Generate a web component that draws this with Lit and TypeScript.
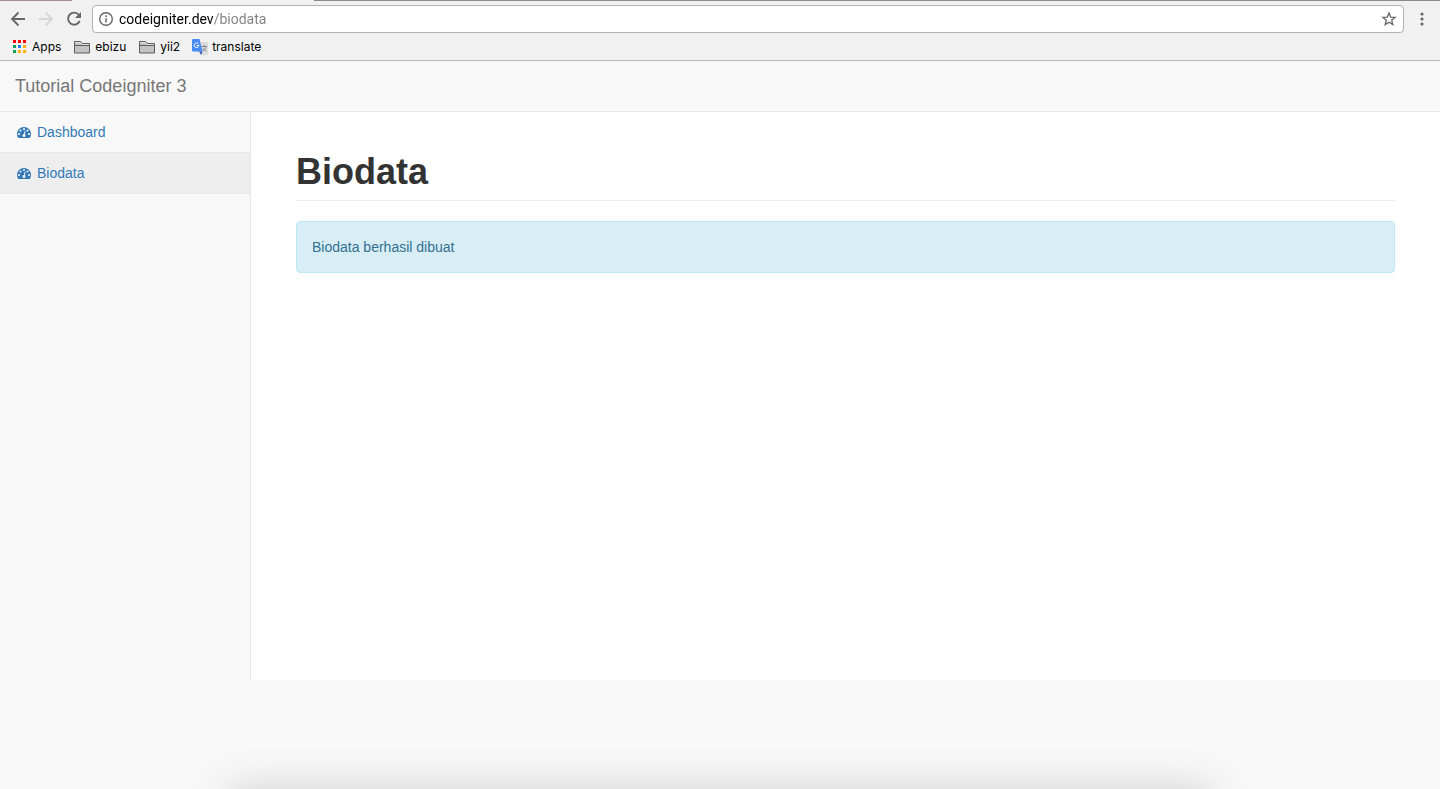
import { LitElement, html, css, svg } from "lit";
import { customElement } from "lit/decorators.js";

const folder = html`<svg width="18" height="14" viewBox="0 0 18 14" aria-hidden="true">
  <path d="M1.500 13V1.500H7.500L9.500 3.500H16.500V13Z" fill="#c4c4c4" stroke="#5c5c5c" stroke-linejoin="round" />
  <path d="M2.500 2.500H7L9 4.500H15.500" stroke="#e4e4e4" fill="none" />
  <path d="M2 5.500H16" stroke="#5c5c5c" />
</svg>`;

const apps = html`<svg width="14" height="14" viewBox="0 0 14 14" aria-hidden="true">
  ${["#f00", "#f00", "#f00", "#0f9d58", "#1a80ff", "#fbb300", "#0f9d58", "#fbb300", "#fbb300"].map(
    (c, i) => svg`<rect x=${(i % 3) * 5} y=${Math.floor(i / 3) * 5} width="3" height="3" fill=${c} />`
  )}
</svg>`;

const translate = html`<svg width="16" height="16" viewBox="0 0 16 16" aria-hidden="true">
  <path d="M6 3H15Q16 3 16 4V15Q16 16 15 16H9Z" fill="#dcdcdc" />
  <path d="M9.500 7.500H15M12 6V8M14 8Q13 11 10.500 12M10.500 9Q12 11 14.500 12" stroke="#7f8b93" fill="none" />
  <path d="M1 0H7.500L10.500 12.500H1Q0 12.500 0 11.500V1Q0 0 1 0Z" fill="#4a8af4" />
  <path d="M7 12.500H10.500L9 16Z" fill="#3059b8" />
  <path d="M6.300 4.800A2.300 2.300 0 1 0 6.800 6.500H4.700" stroke="#fff" fill="none" />
</svg>`;

const gauge = html`<svg class="gauge" width="14" height="14" viewBox="0 0 1792 1792" fill="currentColor" aria-hidden="true">
  <path d="M384 1152q0-53-37.5-90.5t-90.5-37.5-90.5 37.5-37.5 90.5 37.5 90.5 90.5 37.5 90.5-37.5 37.5-90.5zm192-448q0-53-37.5-90.5t-90.5-37.5-90.5 37.5-37.5 90.5 37.5 90.5 90.5 37.5 90.5-37.5 37.5-90.5zm428 481l101-382q6-26-7.5-48.5t-38.5-29.5-48 6.5-30 39.5l-101 382q-60 5-107 43.5t-63 98.5q-20 77 20 146t117 89 146-20 89-117q16-60-6-117t-72-91zm660-33q0-53-37.5-90.5t-90.5-37.5-90.5 37.5-37.5 90.5 37.5 90.5 90.5 37.5 90.5-37.5 37.5-90.5zm-640-640q0-53-37.5-90.5t-90.5-37.5-90.5 37.5-37.5 90.5 37.5 90.5 90.5 37.5 90.5-37.5 37.5-90.5zm448 192q0-53-37.5-90.5t-90.5-37.5-90.5 37.5-37.5 90.5 37.5 90.5 90.5 37.5 90.5-37.5 37.5-90.5zm320 448q0 261-141 483-19 29-54 29h-1402q-35 0-54-29-141-221-141-483 0-182 71-348t191-286 286-191 348-71 348 71 286 191 191 286 71 348z" />
</svg>`;

@customElement("browser-bar")
class BrowserBar extends LitElement {
  static styles = css`
    :host { display: block; background: #f1f1f1; border-bottom: 1px solid #b5b3b5; font-family: Inter, Roboto, sans-serif; color: #000; }
    .edge { display: grid; grid-template-columns: 72px 242px 1fr; height: 1px; }
    .left { background: #a58f8f; }
    .right { background: #8f898d; }
    .tools { display: flex; align-items: center; padding: 4px 8px; }
    button { display: flex; align-items: center; justify-content: center; width: 20px; height: 28px; padding: 0; border: 0; background: none; color: #666; }
    button:disabled { color: #d6d6d6; }
    svg { display: block; flex: none; }
    .nav { display: flex; gap: 8px; }
    .box { flex: 1; display: flex; align-items: center; box-sizing: border-box; height: 28px; margin: 0 8px; padding: 0 4px 0 3px; border: 1px solid #b3b0b3; border-radius: 4px; background: #fff; }
    input { flex: 1; min-width: 0; height: 24px; margin: 0 0 0 3px; padding: 0; border: 0; outline: 0; font: 14px Roboto, sans-serif; color: transparent; background: linear-gradient(90deg, #000 95px, #808080 95px); -webkit-background-clip: text; background-clip: text; }
    .marks { display: flex; align-items: center; gap: 12px; padding: 0 13px 4px; }
    a { display: flex; align-items: center; gap: 4px; height: 19px; color: #000; text-decoration: none; font-size: 12px; line-height: 19px; }
    .apps { gap: 5px; }
  `;
  render() {
    return html`
      <div class="edge"><span class="left"></span><span></span><span class="right"></span></div>
      <div class="tools">
        <div class="nav">
          <button aria-label="Back"><svg width="16" height="16" viewBox="0 0 16 16" fill="none" stroke="currentColor" stroke-width="1.800"><path d="M15 8H2.500M8.500 1.500L2 8L8.500 14.500" /></svg></button>
          <button aria-label="Forward" disabled><svg width="16" height="16" viewBox="0 0 16 16" fill="none" stroke="currentColor" stroke-width="1.800"><path d="M1 8H13.500M7.500 1.500L14 8L7.500 14.500" /></svg></button>
          <button aria-label="Reload"><svg width="16" height="16" viewBox="0 0 16 16" fill="none" stroke="currentColor" stroke-width="1.900"><path d="M13 4.200A6 6 0 1 0 13.700 9.800" /><path d="M15 1V7H9Z" fill="currentColor" stroke="none" /></svg></button>
        </div>
        <div class="box">
          <button aria-label="Site information"><svg width="16" height="16" viewBox="0 0 16 16" fill="none" stroke="currentColor"><circle cx="8" cy="8" r="6.300" stroke-width="1.400" /><path d="M8 7.200V11.500M8 4.300V6" stroke-width="1.500" /></svg></button>
          <input aria-label="Address" value="codeigniter.dev/biodata" />
          <button aria-label="Bookmark this page"><svg width="16" height="16" viewBox="0 0 16 16" fill="none" stroke="currentColor" stroke-width="1.300"><path d="M8 2L9.700 6.100L14.100 6.400L10.700 9.300L11.800 13.600L8 11.300L4.200 13.600L5.300 9.300L1.900 6.400L6.300 6.100Z" /></svg></button>
        </div>
        <button aria-label="Menu"><svg width="16" height="16" viewBox="0 0 16 16" fill="currentColor"><circle cx="8" cy="3" r="1.600" /><circle cx="8" cy="8" r="1.600" /><circle cx="8" cy="13" r="1.600" /></svg></button>
      </div>
      <nav class="marks" aria-label="Bookmarks">
        <a class="apps" href="#apps">${apps}Apps</a>
        <a href="#ebizu">${folder}ebizu</a>
        <a href="#yii2">${folder}yii2</a>
        <a href="#translate">${translate}translate</a>
      </nav>
    `;
  }
}

@customElement("app-root")
class AppRoot extends LitElement {
  static styles = css`
    :host { display: flex; flex-direction: column; position: relative; min-height: 100vh; overflow: hidden; background: #f8f8f8; font: 14px/20px "Liberation Sans", Arial, sans-serif; color: #333; }
    .top { padding: 15px; border-bottom: 1px solid #e7e7e7; }
    .brand { display: block; font-size: 18px; line-height: 20px; color: #777; text-decoration: none; }
    .body { display: grid; grid-template-columns: 250px 1fr; }
    .side a { display: flex; align-items: center; gap: 6px; padding: 10px 17px; border-bottom: 1px solid #e7e7e7; color: #337ab7; text-decoration: none; }
    .side a.active { background: #eee; }
    main { min-height: 568px; padding: 0 45px; border-left: 1px solid #e7e7e7; background: #fff; }
    h1 { margin: 40px 0 20px; padding-bottom: 8px; border-bottom: 1px solid #eee; font-size: 36px; line-height: 40px; font-weight: 600; }
    .alert { padding: 15px; border: 1px solid #bce8f1; border-radius: 4px; background: #d9edf7; color: #31708f; }
    .shade { position: absolute; top: 100%; left: 16%; right: 16%; height: 40px; box-shadow: 0 0 40px rgba(0, 0, 0, 0.17); pointer-events: none; }
  `;
  render() {
    return html`
      <browser-bar></browser-bar>
      <header class="top"><a class="brand" href="#home">Tutorial Codeigniter 3</a></header>
      <div class="body">
        <nav class="side" aria-label="Main">
          <a href="#dashboard">${gauge}Dashboard</a>
          <a class="active" href="#biodata" aria-current="page">${gauge}Biodata</a>
        </nav>
        <main>
          <h1>Biodata</h1>
          <div class="alert" role="status">Biodata berhasil dibuat</div>
        </main>
      </div>
      <div class="shade"></div>
    `;
  }
}
